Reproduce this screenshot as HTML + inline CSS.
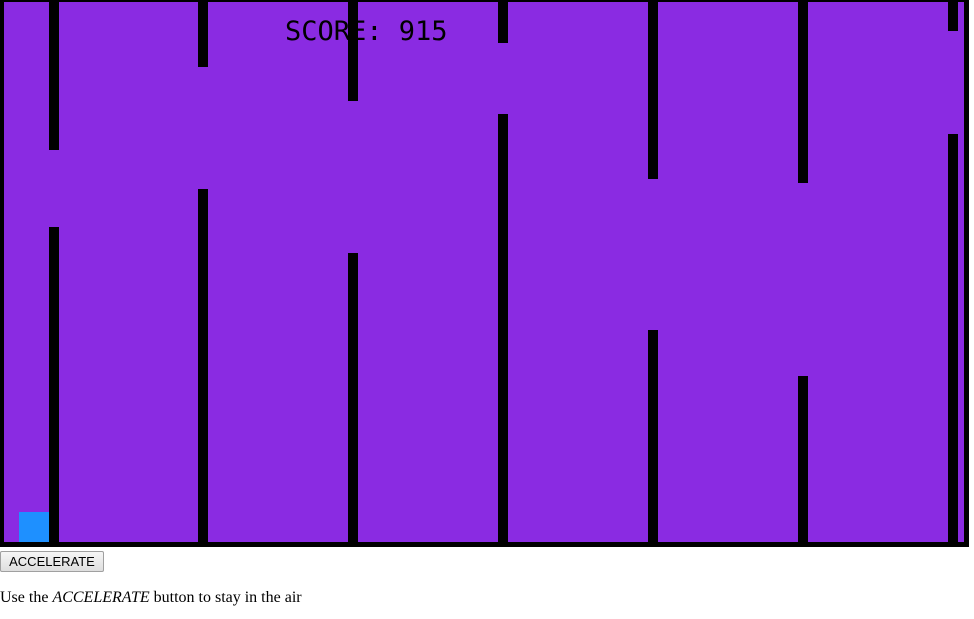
<!DOCTYPE html>
<html><head><style>
body{margin:0;background:#fff;font-family:"Liberation Serif",serif;font-size:16px;}
#c{position:absolute;left:0;top:0;width:969px;height:547px;background:#000;}
#p{position:absolute;left:4px;top:2px;width:960px;height:540px;background:#8a2be2;overflow:hidden;}
.s{position:absolute;left:281px;top:14px;font-family:"DejaVu Sans Mono","Liberation Mono",monospace;font-size:27px;color:#000;line-height:32px;}
.b{position:absolute;background:#000;width:10px;}
#btn{position:absolute;left:0;top:551px;width:104px;height:21px;box-sizing:border-box;border:1px solid #a0a0a0;border-radius:2px;background:linear-gradient(#f6f6f6,#dedede);font-family:"Liberation Sans",sans-serif;font-size:13px;line-height:19px;text-align:center;color:#000;}
#t{position:absolute;left:0;top:589px;line-height:18px;}
</style></head><body>
<div id="c"><div id="p">
<div class="s">SCORE: 915</div>
<div style="position:absolute;left:15px;top:510px;width:30px;height:30px;background:#1e90ff"></div>
<div class="b" style="left:45px;top:0;height:148px"></div><div class="b" style="left:45px;top:225px;height:320px"></div>
<div class="b" style="left:194px;top:0;height:65px"></div><div class="b" style="left:194px;top:187px;height:360px"></div>
<div class="b" style="left:344px;top:0;height:99px"></div><div class="b" style="left:344px;top:251px;height:300px"></div>
<div class="b" style="left:494px;top:0;height:41px"></div><div class="b" style="left:494px;top:112px;height:440px"></div>
<div class="b" style="left:644px;top:0;height:177px"></div><div class="b" style="left:644px;top:328px;height:220px"></div>
<div class="b" style="left:794px;top:0;height:181px"></div><div class="b" style="left:794px;top:374px;height:200px"></div>
<div class="b" style="left:944px;top:0;height:29px"></div><div class="b" style="left:944px;top:132px;height:420px"></div>
</div></div>
<div id="btn">ACCELERATE</div>
<div id="t">Use the <i>ACCELERATE</i> button to stay in the air</div>
</body></html>
